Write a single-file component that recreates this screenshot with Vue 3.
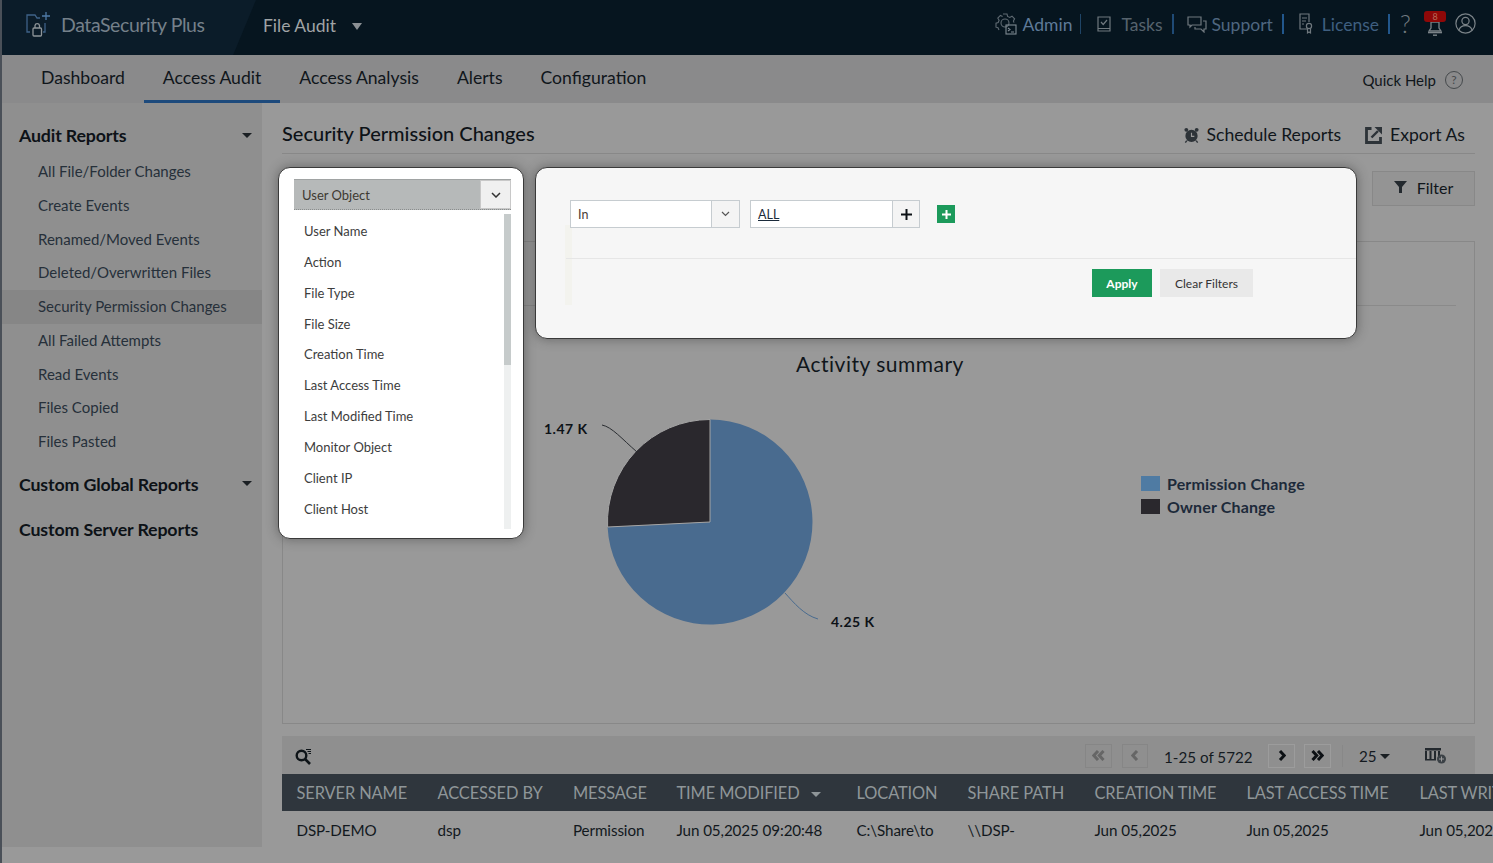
<script setup>
const nav = ['Dashboard', 'Access Audit', 'Access Analysis', 'Alerts', 'Configuration']
const audit = ['All File/Folder Changes', 'Create Events', 'Renamed/Moved Events', 'Deleted/Overwritten Files', 'Security Permission Changes', 'All Failed Attempts', 'Read Events', 'Files Copied', 'Files Pasted']
const fields = ['User Name', 'Action', 'File Type', 'File Size', 'Creation Time', 'Last Access Time', 'Last Modified Time', 'Monitor Object', 'Client IP', 'Client Host']
const cols = [
  { h: 'SERVER NAME', v: 'DSP-DEMO', w: 141 },
  { h: 'ACCESSED BY', v: 'dsp', w: 135.5 },
  { h: 'MESSAGE', v: 'Permission', w: 103.5 },
  { h: 'TIME MODIFIED', v: 'Jun 05,2025 09:20:48', w: 180, sort: true },
  { h: 'LOCATION', v: 'C:\\Share\\to', w: 111 },
  { h: 'SHARE PATH', v: '\\\\DSP-', w: 127 },
  { h: 'CREATION TIME', v: 'Jun 05,2025', w: 152 },
  { h: 'LAST ACCESS TIME', v: 'Jun 05,2025', w: 173 },
  { h: 'LAST WRITE TIME', v: 'Jun 05,2025', w: 180 }
]
</script>

<template>
  <div class="app">
    <header class="top">
      <div class="brand">
        <svg class="logo" width="28" height="28" viewBox="0 0 28 28" fill="none" stroke="#3f6288" stroke-width="1.3">
          <path d="M5 21H2V4h8l2 3h3" />
          <path d="M20 12v9h-2" />
          <path d="M21 1v8M17 5h8" stroke="#4f7aa6" />
          <rect x="8" y="17" width="8.5" height="8" rx="1" stroke="#8f9599" />
          <path d="M10 17v-2.5a2.3 2.3 0 0 1 4.500 0V17" stroke="#8f9599" />
        </svg>
        <span class="brand-name">DataSecurity Plus</span>
      </div>
      <div class="module">File Audit<i class="caret module-caret"></i></div>
      <div class="top-links">
        <span class="tl tl-admin">
          <svg width="25" height="24" viewBox="0 0 25 24" fill="none" stroke="#5f6a72" stroke-width="1.1">
            <path d="M9 2h4l.6 2.400 2.200 1 2.200-1.200 2.600 2.600-1.200 2.200.6 1.600M5 18l-1-2.200-2-.6v-4l2.200-.7.9-2.200L3.800 6l2.600-2.600 2.200 1.200" />
            <circle cx="11" cy="11" r="4" />
            <rect x="12" y="13" width="10" height="9" stroke="#7f8a92" />
            <path d="M14 16l2 1.500-2 1.500M17 20h3" stroke="#7f8a92" />
          </svg>
          <span class="t-admin">Admin</span>
        </span>
        <span class="sep s1"></span>
        <span class="tl tl-tasks">
          <svg width="16" height="18" viewBox="0 0 16 18" fill="none" stroke="#6f787e" stroke-width="1.2">
            <path d="M2 2h12v14H2zM2 13.500h12" />
            <path d="M5 7l2.200 2.500L11 5" />
          </svg>
          <span class="t-tasks">Tasks</span>
        </span>
        <span class="sep s2"></span>
        <span class="tl tl-support">
          <svg width="20" height="18" viewBox="0 0 20 18" fill="none" stroke="#6f787e" stroke-width="1.2">
            <path d="M1 2h13v8H5l-2 2v-2H1z" />
            <path d="M16 6h3v8h-2v3l-3-3H8v-2" />
          </svg>
          <span class="t-support">Support</span>
        </span>
        <span class="sep s3"></span>
        <span class="tl tl-license">
          <svg width="16" height="22" viewBox="0 0 16 22" fill="none" stroke="#6f787e" stroke-width="1.2">
            <path d="M9 16H2V1h9v8" />
            <path d="M4 5h5M4 8h4M4 11h2" />
            <circle cx="11" cy="13" r="2.600" />
            <path d="M9.500 15.500V20l1.500-1 1.500 1v-4.500" />
          </svg>
          <span class="t-license">License</span>
        </span>
        <span class="sep s4"></span>
        <span class="q">?</span>
        <span class="bell">
          <svg width="18" height="22" viewBox="0 0 18 22" fill="#7b8388">
            <path d="M5 13V7h8v6l2 3H3z" fill="none" stroke="#7b8388" stroke-width="1.3" />
            <rect x="2" y="17" width="14" height="1.3" />
            <rect x="7" y="19.500" width="4" height="1.4" />
          </svg>
          <b class="badge">8</b>
        </span>
        <svg class="user" width="21" height="21" viewBox="0 0 21 21" fill="none" stroke="#7b8388" stroke-width="1.2">
          <circle cx="10.500" cy="10.500" r="9.600" />
          <circle cx="10.500" cy="8" r="3.600" />
          <path d="M4 17c1-3.400 3.600-4.400 6.500-4.400S16 13.600 17 17" />
        </svg>
      </div>
    </header>

    <nav class="nav">
      <a v-for="(n, i) in nav" :key="n" :class="['nav-item', { active: i === 1 }]">{{ n }}</a>
      <div class="quick">
        Quick Help
        <span class="quick-q">?</span>
      </div>
    </nav>

    <div class="body">
      <aside class="side">
        <div class="group">Audit Reports<i class="caret"></i></div>
        <div class="items">
          <div v-for="(a, i) in audit" :key="a" :class="['item', { sel: i === 4 }]">{{ a }}</div>
        </div>
        <div class="group g2">Custom Global Reports<i class="caret"></i></div>
        <div class="group g3">Custom Server Reports</div>
      </aside>

      <main class="main">
        <div class="title-row">
          <h1>Security Permission Changes</h1>
          <div class="actions">
            <span class="act">
              <svg width="17" height="18" viewBox="0 0 18 18" fill="#2d3338">
                <circle cx="9" cy="10" r="6.500" />
                <circle cx="3.500" cy="3.500" r="2" />
                <circle cx="14.500" cy="3.500" r="2" />
                <path d="M4 15l-1.500 2M14 15l1.500 2" stroke="#2d3338" stroke-width="1.500" />
                <path d="M9 6.500V10.500H12" fill="none" stroke="#999" stroke-width="1.200" />
              </svg>
              Schedule Reports
            </span>
            <span class="act">
              <svg width="18" height="18" viewBox="0 0 18 18" fill="none" stroke="#2d3338" stroke-width="2.800">
                <path d="M6.500 2.500H1.500v14h14V11" />
                <path d="M6.500 11.500L13 5" stroke-width="2.400" />
                <path d="M9.500 1h7.500v7.500z" fill="#2d3338" stroke="none" />
              </svg>
              Export As
            </span>
          </div>
        </div>

        <div class="filter-row">
          <button class="filter">
            <svg width="13" height="12" viewBox="0 0 13 12" fill="#23292e"><path d="M0 0h13L8 6v6H5V6z" /></svg>
            Filter
          </button>
        </div>

        <section class="chart">
          <svg width="1193" height="483" viewBox="0 0 1193 483">
            <path d="M0 64.500H1174" stroke="#8a8a8a" />
            <text x="598" y="131" text-anchor="middle" class="c-title">Activity summary</text>
            <path d="M428 178.500 A102.500 102.500 0 1 1 325.600 286 L428 281 Z" fill="#496b8f" />
            <path d="M428 178.500 A102.500 102.500 0 0 0 325.600 286 L428 281 Z" fill="#2a282d" stroke="#a5a5a5" stroke-width="1" />
            <path d="M320 184 C330 186 340 198 355 211" fill="none" stroke="#2a2d31" />
            <path d="M503 352 C512 362 522 374 536 378" fill="none" stroke="#496b8f" />
            <text x="262" y="192.500" class="c-val">1.47 K</text>
            <text x="549" y="386" class="c-val">4.25 K</text>
            <rect x="859" y="235" width="19" height="15" fill="#4f7ba3" />
            <rect x="859" y="258" width="19" height="15" fill="#2a282d" />
            <text x="885" y="249" class="c-leg">Permission Change</text>
            <text x="885" y="272" class="c-leg">Owner Change</text>
          </svg>
        </section>

        <div class="toolbar">
          <svg class="search" width="17" height="17" viewBox="0 0 17 17" fill="none" stroke="#0e1418">
            <circle cx="6.500" cy="7.500" r="4.800" stroke-width="2.400" />
            <path d="M10 11l5 5" stroke-width="2.600" />
            <path d="M11 1.500h5M12.500 3.500h3.500M13.500 5.500H16" stroke-width="1" />
          </svg>
          <div class="pager">
            <span class="pg off">
              <svg width="13" height="11" viewBox="0 0 13 11" fill="none" stroke="#666" stroke-width="3"><path d="M6 1L1.800 5.500 6 10M11.500 1L7.300 5.500l4.200 4.500" /></svg>
            </span>
            <span class="pg off pg2">
              <svg width="8" height="11" viewBox="0 0 8 11" fill="none" stroke="#666" stroke-width="3"><path d="M6 1L1.800 5.500 6 10" /></svg>
            </span>
            <span class="count">1-25 of 5722</span>
            <span class="pg on">
              <svg width="8" height="11" viewBox="0 0 8 11" fill="none" stroke="#0c1014" stroke-width="3"><path d="M2 1l4.200 4.500L2 10" /></svg>
            </span>
            <span class="pg on pg3">
              <svg width="13" height="11" viewBox="0 0 13 11" fill="none" stroke="#0c1014" stroke-width="3"><path d="M1.500 1l4.200 4.500L1.500 10M7 1l4.200 4.500L7 10" /></svg>
            </span>
            <span class="vbar"></span>
            <span class="size">25<i class="caret size-caret"></i></span>
            <svg class="colset" width="22" height="16" viewBox="0 0 22 16" fill="#23292e">
              <path d="M0 0h16v2.500H0zM0 3h2v9H0zM4.500 3h2v9h-2zM9 3h2v9H9zM13 3h2v5h-2zM0 11h11v1.500H0z" />
              <circle cx="16.500" cy="11" r="4.500" fill="#3b4146" />
              <path d="M14 11h5M16.500 8.500v5" stroke="#999" stroke-width="1" />
            </svg>
          </div>
        </div>

        <div class="thead">
          <div v-for="c in cols" :key="c.h" class="cell" :style="{ width: c.w + 'px' }">
            {{ c.h }}<i v-if="c.sort" class="caret sort-caret"></i>
          </div>
        </div>
        <div class="trow">
          <div v-for="c in cols" :key="c.h" class="cell" :style="{ width: c.w + 'px' }">{{ c.v }}</div>
        </div>
      </main>
    </div>

    <div class="pop pop-left">
      <div class="sel-box">
        <span class="sel-text">User Object</span>
        <span class="sel-btn">
          <svg width="10" height="6" viewBox="0 0 10 6" fill="none" stroke="#333" stroke-width="1.500"><path d="M1 1l4 4 4-4" /></svg>
        </span>
      </div>
      <div class="list-wrap">
        <ul class="list">
          <li v-for="f in fields" :key="f">{{ f }}</li>
        </ul>
        <div class="scroll"><div class="thumb"></div></div>
      </div>
    </div>

    <div class="pop pop-right">
      <span class="ghost"></span>
      <div class="crit">
        <div class="field f-in">
          <span class="f-text">In</span>
          <span class="f-btn">
            <svg width="9" height="6" viewBox="0 0 9 6" fill="none" stroke="#555" stroke-width="1.200"><path d="M1 1l3.500 3.500L8 1" /></svg>
          </span>
        </div>
        <div class="field f-all">
          <span class="f-text all">ALL</span>
          <span class="f-btn f-plus">
            <svg width="11" height="11" viewBox="0 0 11 11" stroke="#0d1216" stroke-width="2"><path d="M5.500 0v11M0 5.500h11" /></svg>
          </span>
        </div>
        <span class="add">
          <svg width="9" height="9" viewBox="0 0 9 9" stroke="#fff" stroke-width="2"><path d="M4.500 0v9M0 4.500h9" /></svg>
        </span>
      </div>
      <div class="foot">
        <button class="apply">Apply</button>
        <button class="clear">Clear Filters</button>
      </div>
    </div>
  </div>
</template>

<style>
html, body { margin: 0; padding: 0; background: #999; }
</style>

<style scoped>
* { box-sizing: border-box; }
.app {
  position: relative;
  width: 1493px;
  height: 863px;
  overflow: hidden;
  background: #999;
  font-family: Lato, "Liberation Sans", sans-serif;
  color: #14191e;
  border-left: 2px solid #4a5058;
}
.caret {
  display: inline-block;
  width: 0;
  height: 0;
  border-left: 5px solid transparent;
  border-right: 5px solid transparent;
  border-top: 5px solid #1a1f23;
}

/* header */
.top {
  height: 55px;
  background: #06151f;
  display: flex;
  align-items: center;
  color: #8f9599;
}
.brand {
  width: 254px;
  height: 55px;
  background: #0b1c29;
  clip-path: polygon(0 0, 100% 0, 91% 100%, 0 100%);
  display: flex;
  align-items: center;
  padding-left: 23px;
  gap: 8px;
}
.logo { margin-top: -6px; }
.brand-name { font-size: 19.500px; color: #75808a; letter-spacing: -0.41px; margin-top: -7px; }
.module { margin-left: 7px; margin-top: -5px; font-size: 17.500px; color: #a0a4a6; display: flex; align-items: center; }
.module-caret { margin-left: 16px; border-top: 7px solid #8b9094; border-left-width: 5.500px; border-right-width: 5.500px; margin-top: 3px; }
.top-links { margin-left: auto; display: flex; align-items: center; height: 32px; margin-top: -7px; padding-right: 17px; }
.tl { display: flex; align-items: center; font-size: 17.500px; }
.tl-admin { gap: 4px; }
.tl-tasks { gap: 9px; }
.tl-support { gap: 5px; }
.tl-license { gap: 8px; }
.t-admin { color: #5f7a98; }
.t-tasks { color: #56636d; }
.t-support { color: #4f6780; }
.t-license { color: #3f5f80; }
.sep { width: 1px; height: 20px; background: #1f4466; }
.s1 { margin: 0 15px 0 8px; }
.s2 { width: 2px; margin: 0 13px 0 9px; background: #1f4a75; }
.s3 { width: 2px; margin: 0 14px 0 9px; background: #22578c; }
.s4 { width: 2px; margin: 0 10px 0 9px; background: #22578c; }
.q { font-size: 25px; color: #6f787e; font-weight: 300; width: 15px; margin-top: -2px; }
.bell { position: relative; width: 30px; display: flex; justify-content: center; margin-top: 4px; margin-left: 5px; }
.badge {
  position: absolute;
  left: 4px;
  top: -4px;
  width: 22px;
  height: 11px;
  border-radius: 3px;
  background: #8f0808;
  color: #b86a5a;
  font-size: 9px;
  font-weight: 400;
  line-height: 11px;
  text-align: center;
}
.user { margin-left: 5px; margin-top: -2px; }

/* nav */
.nav {
  height: 48px;
  background: #8a8a8b;
  display: flex;
  padding-left: 20px;
  position: relative;
}
.nav-item {
  padding: 12px 19px 0;
  font-size: 17.600px;
  line-height: 22px;
  height: 48px;
  color: #10161b;
  border-bottom: 3px solid transparent;
}
.nav-item.active { border-bottom-color: #1d4a7c; }
.quick {
  margin-left: auto;
  padding-right: 30px;
  display: flex;
  align-items: center;
  height: 48px;
  font-size: 15px;
  color: #10161b;
  gap: 9px;
  padding-top: 1px;
}
.quick-q {
  width: 18px;
  height: 18px;
  border: 1.500px solid #45494c;
  border-radius: 50%;
  font-size: 12px;
  line-height: 15px;
  text-align: center;
  color: #45494c;
}

/* body */
.body { display: flex; height: 760px; }
.side {
  width: 260px;
  height: 744px;
  flex: none;
  background: #8f8f8f;
  padding-top: 20px;
}
.group {
  font-size: 17.800px;
  font-weight: 700;
  line-height: 24px;
  padding-left: 17px;
  padding-right: 10px;
  color: #0d1217;
  display: flex;
  align-items: center;
  justify-content: space-between;
  letter-spacing: -0.15px;
}
.g2 { margin-top: 13px; }
.g3 { margin-top: 21px; }
.items { margin-top: 8px; }
.item {
  height: 33.750px;
  line-height: 33.750px;
  padding-left: 36px;
  font-size: 15px;
  color: #26303a;
}
.item.sel { background: #868686; }

.main { flex: 1; padding: 0 18px 0 20px; min-width: 0; }
.title-row {
  height: 51px;
  border-bottom: 1px solid #888;
  display: flex;
  align-items: center;
  justify-content: space-between;
  padding-right: 10px;
  padding-top: 11px;
}
h1 { margin: -2px 0 0; font-size: 20px; font-weight: 500; color: #0d1217; }
.actions { display: flex; gap: 24px; margin-top: 2px; }
.act { display: flex; align-items: center; gap: 7px; font-size: 17.600px; color: #10161b; }
.filter-row { height: 87px; display: flex; justify-content: flex-end; padding-top: 17px; }
.filter {
  width: 103px;
  height: 35px;
  border: 1px solid #888;
  background: #949494;
  font: 16px Lato, sans-serif;
  color: #10161b;
  display: flex;
  align-items: center;
  justify-content: center;
  gap: 10px;
  padding-bottom: 4px;
}
.chart { height: 483px; border: 1px solid #888; width: 1193px; }
.chart svg { display: block; margin: -1px; }
.c-title { font: 21px Lato, sans-serif; fill: #10161b; letter-spacing: 0.5px; }
.c-val { font: 700 14px Lato, sans-serif; fill: #0d1217; letter-spacing: 0.5px; }
.c-leg { font: 700 16px Lato, sans-serif; fill: #1d2a3a; letter-spacing: 0.15px; }

.toolbar {
  margin-top: 12px;
  height: 38px;
  width: 1193px;
  background: #8f8f8f;
  display: flex;
  align-items: center;
  justify-content: space-between;
  padding: 0 0 0 13px;
}
.search { margin-top: 3px; }
.pager { display: flex; align-items: center; padding-right: 28px; margin-top: 1px; }
.pg {
  width: 27px;
  height: 24px;
  border: 1px solid #868686;
  background: #8f8f8f;
  display: flex;
  align-items: center;
  justify-content: center;
}
.pg.on { border-color: #9c9c9c; }
.pg2 { width: 26px; margin-left: 10px; }
.pg3 { margin-left: 9px; }
.count { font-size: 15.200px; width: 88px; white-space: nowrap; color: #141a1f; margin: 2px 16px 0 16px; }
.vbar { width: 1px; height: 22px; background: #888; margin-left: 11px; }
.size { font-size: 15.200px; margin-left: 16px; color: #141a1f; display: flex; align-items: center; gap: 3px; width: 32px; }
.size-caret { margin-top: 1px; }
.colset { margin-left: 34px; margin-top: 1px; }

.thead, .trow { display: flex; width: 1400px; }
.thead { height: 37px; background: #2f363d; color: #8f9699; font-size: 16.400px; align-items: center; margin-top: 0; }
.trow { height: 37px; font-size: 15.200px; color: #12181d; align-items: center; }
.cell { flex: none; padding-left: 14.500px; white-space: nowrap; letter-spacing: -0.1px; }
.sort-caret { margin-left: 11px; border-top-color: #8f9699; vertical-align: 2px; }

/* popups */
.pop {
  position: absolute;
  top: 167px;
  background: #fff;
  border: 1px solid #3a3a3a;
  border-radius: 12px;
  box-shadow: 0 0 12px rgba(40, 40, 40, 0.45);
}
.pop-left { left: 276px; width: 246px; height: 372px; padding: 11px 0 0 15px; }
.sel-box {
  height: 31px;
  background: #b6b9b9;
  border-top: 1px solid #a0a3a3;
  border-bottom: 1px dotted #8a8d8d;
  display: flex;
  justify-content: space-between;
  width: 217px;
}
.sel-text { font-size: 13px; line-height: 31px; color: #3e3a32; padding-left: 8px; }
.sel-btn { width: 31px; background: #f0f0f0; display: flex; align-items: center; justify-content: center; border: 1px solid #c8c8c8; }
.list-wrap { display: flex; justify-content: space-between; margin-top: 4px; width: 217px; height: 315px; }
.list { list-style: none; margin: 0; padding: 2px 0 0 10px; font-size: 13px; color: #3d3d3d; }
.list li { height: 30.850px; line-height: 30.850px; }
.scroll { width: 7px; height: 315px; background: #eef0f0; }
.thumb { height: 151px; background: #c6cbcb; }

.pop-right {
  left: 533px;
  width: 822px;
  height: 172px;
  background: #f6f6f6;
  padding: 32px 0 0 30px;
}
.ghost { position: absolute; left: 29px; top: 57px; width: 7px; height: 80px; background: #f3f3ee; }
.crit {
  position: relative;
  display: flex;
  align-items: center;
  height: 59px;
  padding: 0 0 30px 4px;
  border-bottom: 1px solid #e6e6e6;
  width: 790px;
}
.field { display: flex; height: 28px; border: 1px solid #c6ccd0; background: #fff; }
.f-in { width: 170px; }
.f-all { width: 170px; margin-left: 10px; }
.f-text { flex: 1; font-size: 12.500px; line-height: 28px; padding-left: 7px; color: #4a4037; }
.all { color: #1b2a3a; text-decoration: underline; font-size: 12.500px; }
.f-btn { width: 28px; border-left: 1px solid #c6ccd0; background: #f4f4f4; display: flex; align-items: center; justify-content: center; }
.f-plus { width: 27px; }
.add { width: 18px; height: 18px; background: #1c9a5b; margin-left: 17px; display: flex; align-items: center; justify-content: center; }
.foot { display: flex; gap: 8px; padding: 10px 0 0 526px; position: relative; }
.apply, .clear { height: 28px; border: none; font: 12px Lato, sans-serif; padding: 0; }
.apply { width: 60px; background: #1c9a5b; color: #fff; font-weight: 700; }
.clear { width: 93px; background: #e9e9e9; color: #333; }
</style>
